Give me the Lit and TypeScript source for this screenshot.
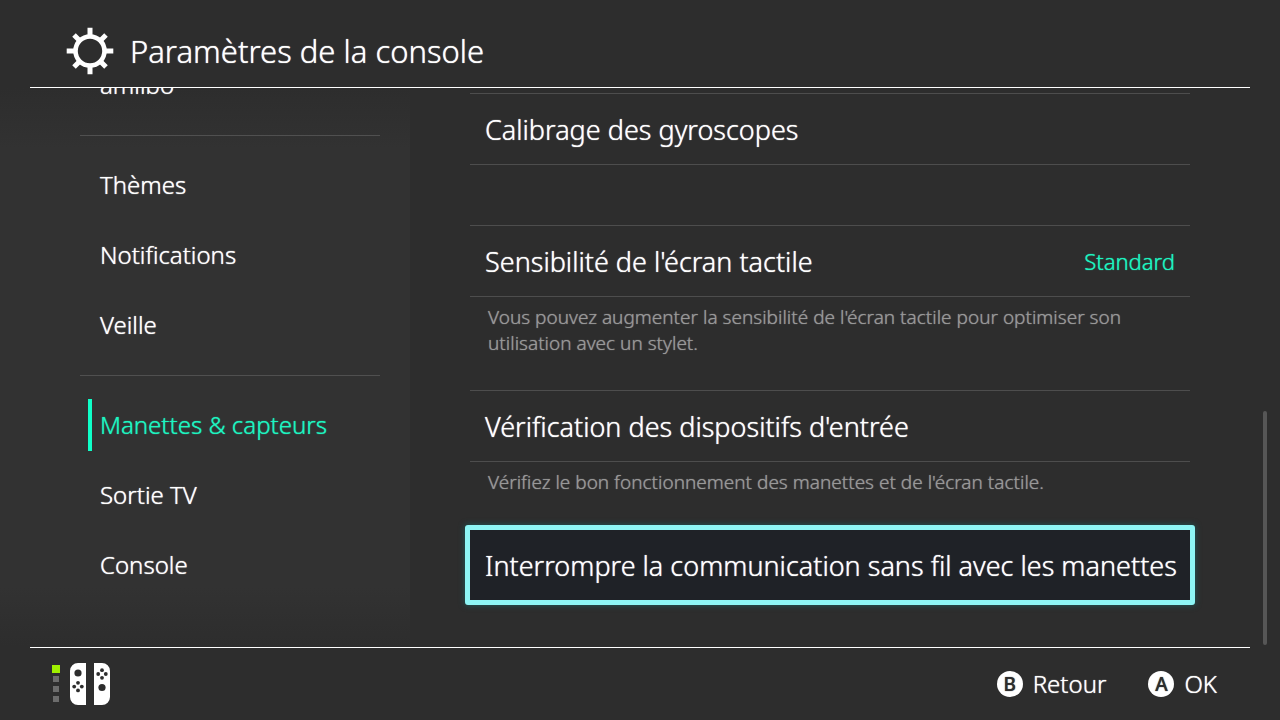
import { LitElement, html, css, nothing } from "lit";
import { customElement, property, state } from "lit/decorators.js";
import { classMap } from "lit/directives/class-map.js";

interface Setting {
  label: string;
  value?: string;
  note?: string;
}

const SECTIONS: string[][] = [
  ["amiibo"],
  ["Thèmes", "Notifications", "Veille"],
  ["Manettes & capteurs", "Sortie TV", "Console"],
];

const SETTINGS: Setting[] = [
  { label: "Calibrage des gyroscopes" },
  {
    label: "Sensibilité de l'écran tactile",
    value: "Standard",
    note: "Vous pouvez augmenter la sensibilité de l'écran tactile pour optimiser son utilisation avec un stylet.",
  },
  {
    label: "Vérification des dispositifs d'entrée",
    note: "Vérifiez le bon fonctionnement des manettes et de l'écran tactile.",
  },
  { label: "Interrompre la communication sans fil avec les manettes" },
];

@customElement("settings-nav")
class SettingsNav extends LitElement {
  @property() current = "";

  static styles = css`
    :host {
      display: flex;
      min-height: 0;
      overflow: hidden;
      background: linear-gradient(#2d2d2d, #323232 60px, #323232 calc(100% - 60px), #2d2d2d);
    }
    .nav {
      flex: 1;
      display: flex;
      flex-direction: column;
      justify-content: flex-end;
      padding: 0 30px 47px 80px;
    }
    .group {
      list-style: none;
      margin: 0;
      padding: 0 0 15px;
    }
    .group + .group {
      border-top: 1px solid #505050;
      padding-top: 14px;
    }
    .group:last-child {
      padding-bottom: 0;
    }
    .link {
      display: flex;
      align-items: center;
      height: 70px;
      padding-left: 8px;
      color: #fff;
      font-size: 24px;
      text-decoration: none;
      white-space: nowrap;
    }
    .label {
      box-sizing: border-box;
      display: flex;
      align-items: center;
      height: 52px;
      padding: 0 0 2px 8px;
      border-left: 4px solid transparent;
    }
    .active {
      color: #1ef5c0;
    }
    .active .label {
      border-color: #0fffc8;
    }
  `;

  private pick(e: Event, name: string) {
    e.preventDefault();
    this.dispatchEvent(new CustomEvent("pick", { detail: name }));
  }

  render() {
    return html`<nav class="nav" aria-label="Paramètres">
      ${SECTIONS.map(
        (group) => html`<ul class="group">
          ${group.map(
            (name) => html`<li>
              <a
                href="#"
                class=${classMap({ link: true, active: name === this.current })}
                aria-current=${name === this.current ? "page" : nothing}
                @click=${(e: Event) => this.pick(e, name)}
                ><span class="label">${name}</span></a
              >
            </li>`
          )}
        </ul>`
      )}
    </nav>`;
  }
}

@customElement("settings-list")
class SettingsList extends LitElement {
  @state() private selected = 3;

  static styles = css`
    :host {
      display: flex;
      flex-direction: column;
      justify-content: flex-end;
      min-width: 0;
      min-height: 0;
      overflow: hidden;
      padding: 0 73px 46px 60px;
    }
    .row {
      box-sizing: border-box;
      display: flex;
      align-items: center;
      justify-content: space-between;
      width: 100%;
      height: 72px;
      padding: 0 12px 0 15px;
      border: 0 solid #4d4d4d;
      border-width: 1px 0;
      background: none;
      color: #fff;
      font: inherit;
      font-size: 27px;
      text-align: left;
      text-shadow: inherit;
      white-space: nowrap;
    }
    .item {
      flex: none;
      padding-bottom: 60px;
    }
    .noted {
      padding-bottom: 34px;
    }
    .item:last-child {
      padding-bottom: 0;
    }
    .row:focus {
      outline: none;
    }
    .selected {
      width: calc(100% + 10px);
      height: 80px;
      margin: -4px -5px;
      border: 5px solid #8ef6f5;
      border-radius: 3px;
      background: #1f2227;
      box-shadow: 0 0 6px #1c5c5c;
    }
    .value {
      padding-right: 3px;
      color: #1ef5c0;
      font-size: 22px;
    }
    .note {
      margin: 7px 18px 0;
      color: #989898;
      font-size: 19px;
      line-height: 26px;
    }
  `;

  render() {
    return html`${SETTINGS.map(
      (s, i) => html`<div class=${classMap({ item: true, noted: !!s.note })}>
        <button
          type="button"
          class=${classMap({ row: true, selected: i === this.selected })}
          @click=${() => (this.selected = i)}
        >
          <span>${s.label}</span>
          ${s.value ? html`<span class="value">${s.value}</span>` : nothing}
        </button>
        ${s.note ? html`<p class="note">${s.note}</p>` : nothing}
      </div>`
    )}`;
  }
}

@customElement("app-root")
class AppRoot extends LitElement {
  @state() private current = "Manettes & capteurs";

  static styles = css`
    :host {
      display: grid;
      grid-template-rows: auto 1fr auto;
      height: 100vh;
      min-width: 960px;
      overflow: hidden;
      background: #2d2d2d;
      color: #fff;
      font-family: "Noto Sans", "Open Sans", sans-serif;
      font-weight: 300;
      text-shadow: 0 0 1px;
    }
    .header {
      display: flex;
      align-items: center;
      gap: 16px;
      height: 72px;
      margin: 0 30px;
      padding: 15px 0 0 36px;
      border-bottom: 1px solid #fff;
    }
    .title {
      margin: 0;
      font-size: 31px;
      font-weight: inherit;
      line-height: 40px;
    }
    .gear {
      width: 48px;
      height: 48px;
    }
    .body {
      display: grid;
      grid-template-columns: 410px 1fr 17px;
      min-height: 0;
    }
    .track {
      display: flex;
      flex-direction: column;
      justify-content: flex-end;
      padding-bottom: 2px;
    }
    .thumb {
      width: 4px;
      height: 42%;
      border-radius: 2px;
      background: #565656;
    }
    .footer {
      display: flex;
      align-items: center;
      justify-content: space-between;
      height: 72px;
      margin: 0 30px;
      padding: 0 33px 0 22px;
      border-top: 1px solid #fff;
    }
    .pads {
      width: 60px;
      height: 44px;
    }
    .actions {
      display: flex;
      gap: 42px;
    }
    .action {
      display: flex;
      align-items: center;
      gap: 10px;
      padding: 0;
      border: 0;
      background: none;
      color: #fff;
      font: inherit;
      font-size: 24px;
      line-height: 32px;
      text-shadow: inherit;
    }
    .key {
      display: grid;
      place-items: center;
      width: 26px;
      height: 26px;
      border-radius: 50%;
      background: #fff;
      color: #2d2d2d;
      font-size: 19px;
      font-weight: 500;
      line-height: 26px;
    }
  `;

  render() {
    return html`
      <header class="header">
        <svg class="gear" viewBox="-24 -24 48 48" fill="none" stroke="#fff" aria-hidden="true">
          <circle r="14.5" stroke-width="4.6" />
          <path
            stroke-width="5"
            d="M0-23.3V-15M0 23.3V15M-23.3 0H-15M23.3 0H15M-16-16-10-10M16-16 10-10M-16 16-10 10M16 16 10 10"
          />
        </svg>
        <h1 class="title">Paramètres de la console</h1>
      </header>
      <main class="body">
        <settings-nav
          .current=${this.current}
          @pick=${(e: CustomEvent) => (this.current = e.detail)}
        ></settings-nav>
        <settings-list></settings-list>
        <div class="track"><div class="thumb"></div></div>
      </main>
      <footer class="footer">
        <svg class="pads" viewBox="0 0 60 44" role="img" aria-label="Manette 1">
          <path fill="#a0f000" d="M0 3h8v8H0z" />
          <path fill="#6c6c6c" d="M1 14h6v6H1zM1 24h6v6H1zM1 34h6v6H1z" />
          <path fill="#fff" d="M34 1v42h-8a8 8 0 0 1-8-8V9a8 8 0 0 1 8-8zM42 1v42h8a8 8 0 0 0 8-8V9a8 8 0 0 0-8-8z" />
          <g fill="#2d2d2d">
            <circle cx="26" cy="11" r="3.6" />
            <circle cx="50" cy="25.5" r="3.6" />
            <circle cx="26" cy="20.8" r="1.9" />
            <circle cx="26" cy="28.4" r="1.9" />
            <circle cx="22.2" cy="24.6" r="1.9" />
            <circle cx="29.8" cy="24.6" r="1.9" />
            <circle cx="50" cy="8.2" r="1.9" />
            <circle cx="50" cy="15.8" r="1.9" />
            <circle cx="46.2" cy="12" r="1.9" />
            <circle cx="53.8" cy="12" r="1.9" />
          </g>
        </svg>
        <div class="actions">
          <button type="button" class="action"><span class="key">B</span>Retour</button>
          <button type="button" class="action"><span class="key">A</span>OK</button>
        </div>
      </footer>
    `;
  }
}
